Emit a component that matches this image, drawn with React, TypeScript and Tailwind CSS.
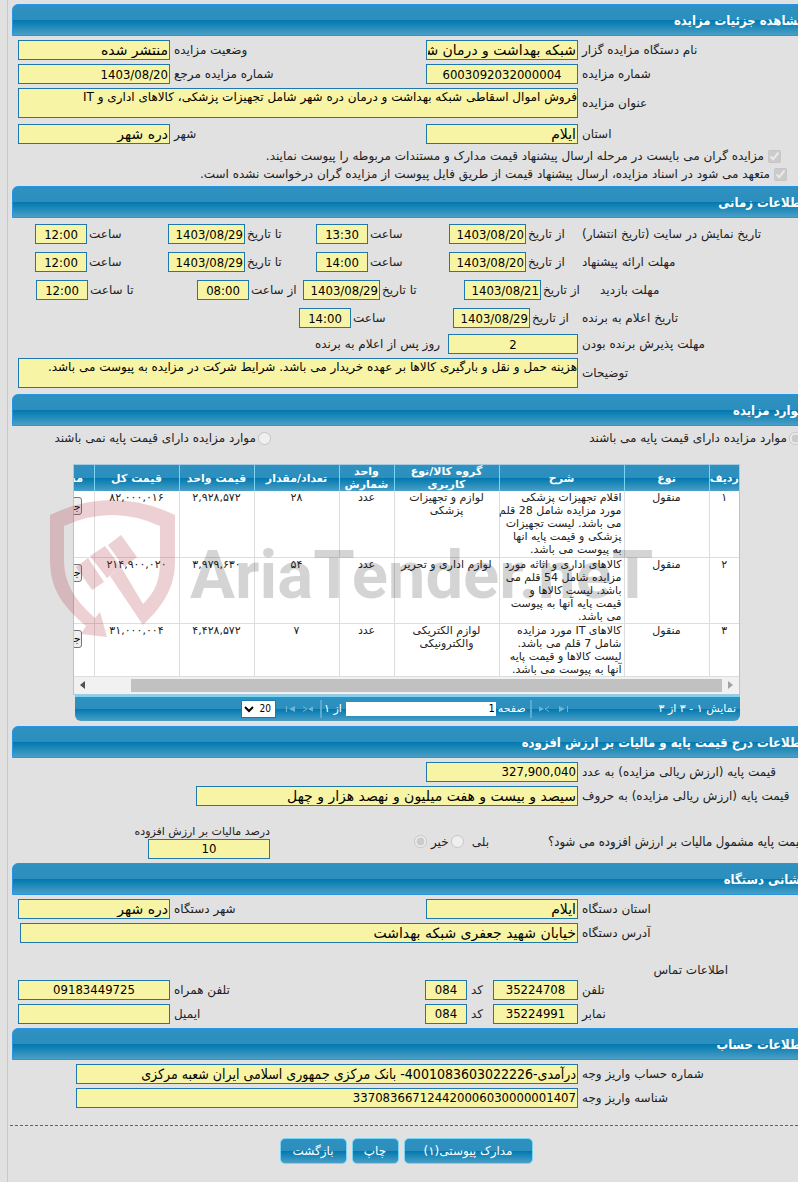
import type { ReactNode } from "react";

const BAR = "bg-[linear-gradient(to_bottom,#2f91c0_0%,#2c8ebd_50%,#0078ae_50%,#4a9fc6_100%)]";

const NARROW = "font-['DejaVu_Sans_Condensed','DejaVu_Sans',sans-serif]";

const items = [
  {
    row: "۱",
    kind: "منقول",
    description: "اقلام تجهیزات پزشکی\nمورد مزایده شامل 28 قلم\nمی باشد. لیست تجهیزات\nپزشکی و قیمت پایه انها\nبه پیوست می باشد.",
    group: "لوازم و تجهیزات پزشکی",
    unit: "عدد",
    count: "۲۸",
    price: "۲,۹۲۸,۵۷۲",
    total: "۸۲,۰۰۰,۰۱۶",
    height: "h-[66px]",
  },
  {
    row: "۲",
    kind: "منقول",
    description: "کالاهای اداری و اثاثه مورد\nمزایده شامل 54 قلم می\nباشد. لیست کالاها و\nقیمت پایه آنها به پیوست\nمی باشد.",
    group: "لوازم اداری و تحریر",
    unit: "عدد",
    count: "۵۴",
    price: "۳,۹۷۹,۶۳۰",
    total: "۲۱۴,۹۰۰,۰۲۰",
    height: "h-[66px]",
  },
  {
    row: "۳",
    kind: "منقول",
    description: "کالاهای IT مورد مزایده\nشامل 7 قلم می باشد.\nلیست کالاها و قیمت پایه\nآنها به پیوست می باشد.",
    group: "لوازم الکتریکی والکترونیکی",
    unit: "عدد",
    count: "۷",
    price: "۴,۴۲۸,۵۷۲",
    total: "۳۱,۰۰۰,۰۰۴",
    height: "h-[52px]",
  },
];

const columns = [
  { title: "ردیف", width: "w-[30px]" },
  { title: "نوع", width: "w-[85px]" },
  { title: "شرح", width: "w-[125px]" },
  { title: "گروه کالا/نوع کاربری", width: "w-[105px]" },
  { title: "واحد شمارش", width: "w-[55px]" },
  { title: "تعداد/مقدار", width: "w-[85px]" },
  { title: "قیمت واحد", width: "w-[75px]" },
  { title: "قیمت کل", width: "w-[85px]" },
  { title: "مشخصات", width: "w-[74px]" },
];

function SectionTitle({ children }: { children: ReactNode }) {
  return (
    <h2 className={`-mr-3 h-8 rounded-tl-md border border-[#2795e3] pr-1 text-[13px] leading-[32px] font-bold text-white ${NARROW} ${BAR}`}>
      {children}
    </h2>
  );
}

interface FieldProps {
  id: string;
  value: string;
  className?: string;
}

// digits run wide, so anything numeric takes the narrow face
function fieldFace(value: string) {
  if (/^[\d/:,]+$/.test(value)) return `text-[13px] ${NARROW}`;
  if (/\d/.test(value)) return `text-[14px] ${NARROW}`;
  return "text-[14px]";
}

function Field({ id, value, className = "" }: FieldProps) {
  return (
    <input
      id={id}
      readOnly
      value={value}
      className={`h-5 shrink-0 border border-[#1f78ab] bg-[#f7f4a5] px-px text-black outline-none ${fieldFace(value)} ${className}`}
    />
  );
}

function Area({ id, value }: { id: string; value: string }) {
  return (
    <textarea
      id={id}
      readOnly
      value={value}
      className="block h-[30px] w-[560px] resize-none overflow-hidden border border-[#1f78ab] bg-[#f7f4a5] px-0 text-[12px] leading-[16px] text-black outline-none"
    />
  );
}

interface RowProps {
  id: string;
  label: string;
  labelClass?: string;
  children: ReactNode;
}

// label column on the right, its text hugging the 560px field column
function Row({ id, label, labelClass = "pl-1", children }: RowProps) {
  return (
    <div className="flex items-center pl-1.5">
      <label htmlFor={id} className={`flex-1 text-left whitespace-nowrap ${labelClass}`}>
        {label}
      </label>
      <div className="flex w-[560px] shrink-0 items-center">{children}</div>
    </div>
  );
}

interface SlotProps extends FieldProps {
  label: string;
  slot: string;
  gap?: string;
}

function Slot({ id, label, value, slot, gap = "gap-0.5", className }: SlotProps) {
  return (
    <div className={`flex shrink-0 items-center justify-end ${gap} ${slot}`}>
      <label htmlFor={id} className="whitespace-nowrap">
        {label}
      </label>
      <Field id={id} value={value} className={className} />
    </div>
  );
}

function Watermark() {
  return (
    <div dir="ltr" aria-hidden="true" className="pointer-events-none absolute top-[39px] left-[38px] flex">
      <svg width="126" height="140" viewBox="0 0 126 140" fill="#a92937" fillOpacity="0.22">
        <path d="M0 16 Q62 -14 125 16 V62 C125 88 114 106 93 126 L60 77 L71 68 L93 105 C105 93 110 82 110 62 V27 Q62 5 14 27 V60 C14 84 24 100 45 119 L50 113 L57 138 L31 135 L36 127 C10 105 0 88 0 60 Z" />
        <path d="M26 68 L38 59 L54 83 L42 91 Z" />
        <path d="M40 57 L55 47 L71 68 L57 79 Z" />
        <path d="M58 46 L71 36 L87 58 L74 68 Z" />
      </svg>
      <span className="mt-[34px] ml-[14px] font-['Roboto',sans-serif] text-[67px] leading-[84px] font-bold text-black/17">AriaTender.neT</span>
    </div>
  );
}

function PagerArrow({ double, flip }: { double?: boolean; flip?: boolean }) {
  return (
    <svg width="12" height="8" viewBox="0 0 12 8" className={flip ? "-scale-x-100" : ""} fill="#6fb4d6" stroke="#6fb4d6">
      {double ? (
        <>
          <path d="M1 1.5 L6 4 L1 6.5 Z" stroke="none" />
          <path d="M11 1.5 L7 4 L11 6.5" fill="none" />
        </>
      ) : (
        <>
          <path d="M1 1 L7 4 L1 7 Z" stroke="none" />
          <path d="M9.5 1 V7" fill="none" />
        </>
      )}
    </svg>
  );
}

function ItemsTable() {
  return (
    <div className="mr-[58px] ml-[61px]">
      <div className="overflow-hidden border border-[#a6c9e2] bg-white">
        <table className="w-[719px] table-fixed border-collapse text-[11px] leading-[13px] text-[#222]">
          <thead>
            <tr className={`h-[26px] text-white ${BAR}`}>
              {columns.map((column) => (
                <th key={column.title} className={`border-l border-[#77d5f7] p-0 font-bold ${column.width}`}>
                  {column.title}
                </th>
              ))}
            </tr>
          </thead>
          <tbody>
            {items.map((item) => (
              <tr key={item.row} className={`border-b border-[#ddd] align-top ${item.height}`}>
                <td className="border-l border-[#ddd] p-0 text-center">{item.row}</td>
                <td className="border-l border-[#ddd] p-0 text-center">{item.kind}</td>
                <td className="border-l border-[#ddd] py-0 pr-0.5 pl-0 text-right whitespace-pre">{item.description}</td>
                <td className="border-l border-[#ddd] px-1 py-0 text-center">{item.group}</td>
                <td className="border-l border-[#ddd] p-0 text-center">{item.unit}</td>
                <td className="border-l border-[#ddd] p-0 text-center">{item.count}</td>
                <td className="border-l border-[#ddd] p-0 text-center">{item.price}</td>
                <td className="border-l border-[#ddd] p-0 text-center">{item.total}</td>
                <td className="py-0 pr-3 pl-0 text-right">
                  <button className="mt-1.5 h-[18px] w-10 rounded-[3px] border border-[#767676] bg-[#efefef] text-right text-black">جزئیات</button>
                </td>
              </tr>
            ))}
          </tbody>
        </table>
        <div className="flex h-[17px] items-center justify-between bg-[#f1f1f1] px-1.5">
          <svg width="5" height="8" viewBox="0 0 5 8" fill="#a3a3a3">
            <path d="M0 0 L5 4 L0 8 Z" />
          </svg>
          <div className="mr-1.5 ml-[46px] h-[13px] flex-1 bg-[#c1c1c1]" />
          <svg width="5" height="8" viewBox="0 0 5 8" fill="#505050">
            <path d="M5 0 L0 4 L5 8 Z" />
          </svg>
        </div>
      </div>
      <div className={`ml-0.5 flex h-[26px] items-center justify-between rounded-b-md border-t-2 border-[#77d5f7] pr-1 pl-[166px] text-[11px] text-white ${BAR}`}>
        <span>نمایش ۱ - ۳ از ۳</span>
        <div className="flex items-center">
          <button aria-label="صفحه اول" className="ml-2">
            <PagerArrow />
          </button>
          <button aria-label="صفحه قبل" className="ml-1.5">
            <PagerArrow double />
          </button>
          <span className="ml-1 h-[18px] w-0.5 bg-[#5da9cf]" />
          <label htmlFor="page" className="ml-0.5">
            صفحه
          </label>
          <input id="page" defaultValue="1" className={`h-[14px] w-[150px] bg-white px-px text-[11px] text-black ${NARROW}`} />
          <span className="mr-1 ml-0.5">از ۱</span>
          <span className="ml-1.5 h-[18px] w-0.5 bg-[#5da9cf]" />
          <button aria-label="صفحه بعد" className="ml-1.5">
            <PagerArrow double flip />
          </button>
          <button aria-label="صفحه آخر" className="ml-2">
            <PagerArrow flip />
          </button>
          <select aria-label="تعداد در صفحه" className={`h-[18px] w-[35px] border border-[#1f78ab] bg-white text-[10px] text-black ${NARROW}`}>
            <option>20</option>
          </select>
        </div>
      </div>
    </div>
  );
}

function ActionButton({ className, children }: { className: string; children: ReactNode }) {
  return <button className={`h-[26px] rounded-[5px] border border-[#77d5f7] text-[12px] text-white ${BAR} ${className}`}>{children}</button>;
}

export default function App() {
  return (
    <main dir="rtl" className="min-h-screen overflow-hidden bg-[#e1e1e1] pl-[7px] font-['DejaVu_Sans',sans-serif] text-[12px] leading-[16px] text-[#222]">
      <div className="min-h-screen border-l border-[#c8c8c8] pt-1 pb-4 pl-1">
        <SectionTitle>مشاهده جزئیات مزایده</SectionTitle>
        <section className="flex flex-col gap-1 pt-1 pb-1">
          <Row id="org" label="نام دستگاه مزایده گزار">
            <Field id="org" value="شبکه بهداشت و درمان شهرستان دره شهر" className="w-[152px]" />
            <Slot id="status" label="وضعیت مزایده" value="منتشر شده" slot="flex-1" gap="gap-1" className="w-[152px]" />
          </Row>
          <Row id="number" label="شماره مزایده">
            <Field id="number" value="6003092032000004" className="w-[152px] text-center" />
            <Slot id="ref" label="شماره مزایده مرجع" value="1403/08/20" slot="flex-1" gap="gap-1" className="w-[152px]" />
          </Row>
          <Row id="subject" label="عنوان مزایده">
            <Area id="subject" value="فروش اموال اسقاطی شبکه بهداشت و درمان دره شهر شامل تجهیزات پزشکی، کالاهای اداری و IT" />
          </Row>
          <div className="pt-0.5">
            <Row id="province" label="استان">
              <Field id="province" value="ایلام" className="w-[152px]" />
              <Slot id="city" label="شهر" value="دره شهر" slot="flex-1" gap="gap-1" className="w-[152px]" />
            </Row>
          </div>
          <div className="flex flex-col gap-0.5">
            <label className="flex items-center gap-1 pr-[17px]">
              <input type="checkbox" checked disabled readOnly className="size-[13px]" />
              مزایده گران می بایست در مرحله ارسال پیشنهاد قیمت مدارک و مستندات مربوطه را پیوست نمایند.
            </label>
            <label className="flex items-center gap-1 pr-[11px]">
              <input type="checkbox" checked disabled readOnly className="size-[13px]" />
              متعهد می شود در اسناد مزایده، ارسال پیشنهاد قیمت از طریق فایل پیوست از مزایده گران درخواست نشده است.
            </label>
          </div>
        </section>

        <SectionTitle>اطلاعات زمانی</SectionTitle>
        <section className="flex flex-col gap-2 pt-1.5 pb-1.5">
          <Row id="pub-from" label="تاریخ نمایش در سایت (تاریخ انتشار)">
            <Slot id="pub-from" label="از تاریخ" value="1403/08/20" slot="w-[129px]" className="w-[77px]" />
            <Slot id="pub-from-time" label="ساعت" value="13:30" slot="w-[133px]" className="w-[52px] text-center" />
            <Slot id="pub-to" label="تا تاریخ" value="1403/08/29" slot="w-[148px]" className="w-[77px]" />
            <Slot id="pub-to-time" label="ساعت" value="12:00" slot="w-[133px]" className="w-[52px] text-center" />
          </Row>
          <Row id="offer-from" label="مهلت ارائه پیشنهاد">
            <Slot id="offer-from" label="از تاریخ" value="1403/08/20" slot="w-[129px]" className="w-[77px]" />
            <Slot id="offer-from-time" label="ساعت" value="14:00" slot="w-[133px]" className="w-[52px] text-center" />
            <Slot id="offer-to" label="تا تاریخ" value="1403/08/29" slot="w-[148px]" className="w-[77px]" />
            <Slot id="offer-to-time" label="ساعت" value="12:00" slot="w-[133px]" className="w-[52px] text-center" />
          </Row>
          <Row id="visit-from" label="مهلت بازدید" labelClass="pl-[22px]">
            <Slot id="visit-from" label="از تاریخ" value="1403/08/21" slot="w-[114px]" className="w-[77px]" />
            <Slot id="visit-to" label="تا تاریخ" value="1403/08/29" slot="w-[161px]" className="w-[77px]" />
            <Slot id="visit-from-time" label="از ساعت" value="08:00" slot="w-[106px]" className="w-[52px] text-center" />
            <Slot id="visit-to-time" label="تا ساعت" value="12:00" slot="w-[161px]" className="w-[52px] text-center" />
          </Row>
          <Row id="winner-date" label="تاریخ اعلام به برنده">
            <Slot id="winner-date" label="از تاریخ" value="1403/08/29" slot="w-[125px]" className="w-[77px]" />
            <Slot id="winner-time" label="ساعت" value="14:00" slot="w-[154px]" className="w-[52px] text-center" />
          </Row>
          <div className="-mt-0.5 flex flex-col gap-1">
            <Row id="accept" label="مهلت پذیرش برنده بودن">
              <Field id="accept" value="2" className="w-[130px] text-center" />
              <span className="mr-2">روز پس از اعلام به برنده</span>
            </Row>
            <Row id="notes" label="توضیحات">
              <Area id="notes" value="هزینه حمل و نقل و بارگیری کالاها بر عهده خریدار می باشد. شرایط شرکت در مزایده به پیوست می باشد." />
            </Row>
          </div>
        </section>

        <SectionTitle>موارد مزایده</SectionTitle>
        <section className="relative pb-[5px]">
          <div className="-mr-1 flex items-center pt-1 pb-[18px]">
            <label className="flex items-center gap-0.5">
              <input type="radio" name="base-price" checked disabled readOnly className="size-[13px]" />
              موارد مزایده دارای قیمت پایه می باشند
            </label>
            <label className="mr-auto flex items-center gap-0.5 pl-[244px]">
              <input type="radio" name="base-price" disabled className="size-[13px]" />
              <span className="w-0 whitespace-nowrap">موارد مزایده دارای قیمت پایه نمی باشند</span>
            </label>
          </div>
          <ItemsTable />
          <div className="absolute inset-x-0 top-[34px]">
            <Watermark />
          </div>
        </section>

        <SectionTitle>اطلاعات درج قیمت پایه و مالیات بر ارزش افزوده</SectionTitle>
        <section className="flex flex-col gap-1 pt-1 pb-1">
          <Row id="price" label="قیمت پایه (ارزش ریالی مزایده) به عدد">
            <Field id="price" value="327,900,040" className="w-[152px]" />
          </Row>
          <Row id="price-words" label="قیمت پایه (ارزش ریالی مزایده) به حروف">
            <Field id="price-words" value="سیصد و بیست و هفت میلیون و نهصد هزار و چهل" className="w-[382px]" />
          </Row>
          <div className="-mr-6 flex items-center pt-[15px] pl-1.5">
            <span className={`flex-1 text-left text-[13px] whitespace-nowrap ${NARROW}`}>قیمت پایه مشمول مالیات بر ارزش افزوده می شود؟</span>
            <div className="flex w-[530px] shrink-0 items-center gap-0.5">
              <label className="mr-[59px] flex items-center gap-2">
                بلی
                <input type="radio" name="vat" disabled className="size-[13px]" />
              </label>
              <label className="flex items-center gap-1">
                خیر
                <input type="radio" name="vat" checked disabled readOnly className="size-[13px]" />
              </label>
              <div className="mr-auto ml-[130px] flex w-[122px] flex-col items-start">
                <label htmlFor="vat-rate" className="text-[11px] leading-[14px] whitespace-nowrap">
                  درصد مالیات بر ارزش افزوده
                </label>
                <Field id="vat-rate" value="10" className="w-[122px] text-center" />
              </div>
            </div>
          </div>
        </section>

        <SectionTitle>نشانی دستگاه</SectionTitle>
        <section className="flex flex-col gap-1 pt-1 pb-1">
          <Row id="org-province" label="استان دستگاه">
            <Field id="org-province" value="ایلام" className="w-[152px]" />
            <Slot id="org-city" label="شهر دستگاه" value="دره شهر" slot="flex-1" gap="gap-1" className="w-[152px]" />
          </Row>
          <Row id="address" label="آدرس دستگاه">
            <Field id="address" value="خیابان شهید جعفری شبکه بهداشت" className="w-[558px]" />
          </Row>
          <h3 className="mt-[15px] pr-[70px]">اطلاعات تماس</h3>
          <div className="-mt-0.5 flex flex-col gap-1">
            <Row id="phone" label="تلفن">
              <Field id="phone" value="35224708" className="w-[85px] text-center" />
              <Slot id="phone-code" label="کد" value="084" slot="w-[68px]" gap="gap-1" className="w-[42px] text-center" />
              <Slot id="mobile" label="تلفن همراه" value="09183449725" slot="flex-1" gap="gap-1" className="w-[152px] text-center" />
            </Row>
            <Row id="fax" label="نمابر">
              <Field id="fax" value="35224991" className="w-[85px] text-center" />
              <Slot id="fax-code" label="کد" value="084" slot="w-[68px]" gap="gap-1" className="w-[42px] text-center" />
              <Slot id="email" label="ایمیل" value="" slot="flex-1" gap="gap-1" className="w-[152px]" />
            </Row>
          </div>
        </section>

        <SectionTitle>اطلاعات حساب</SectionTitle>
        <section className="flex flex-col gap-1 pt-1">
          <Row id="account" label="شماره حساب واریز وجه">
            <Field id="account" value="درآمدی-4001083603022226- بانک مرکزی جمهوری اسلامی ایران شعبه مرکزی" className="w-[502px]" />
          </Row>
          <Row id="deposit" label="شناسه واریز وجه">
            <Field id="deposit" value="337083667124420006030000001407" className="w-[502px]" />
          </Row>
        </section>

        <footer className="mt-[17px] -ml-0.5 flex justify-center gap-[5px] border-t border-dashed border-[#1f78ab] pt-3 pl-1">
          <ActionButton className="w-[129px]">مدارک پیوستی(۱)</ActionButton>
          <ActionButton className="w-[47px]">چاپ</ActionButton>
          <ActionButton className="w-[67px]">بازگشت</ActionButton>
        </footer>
      </div>
    </main>
  );
}
